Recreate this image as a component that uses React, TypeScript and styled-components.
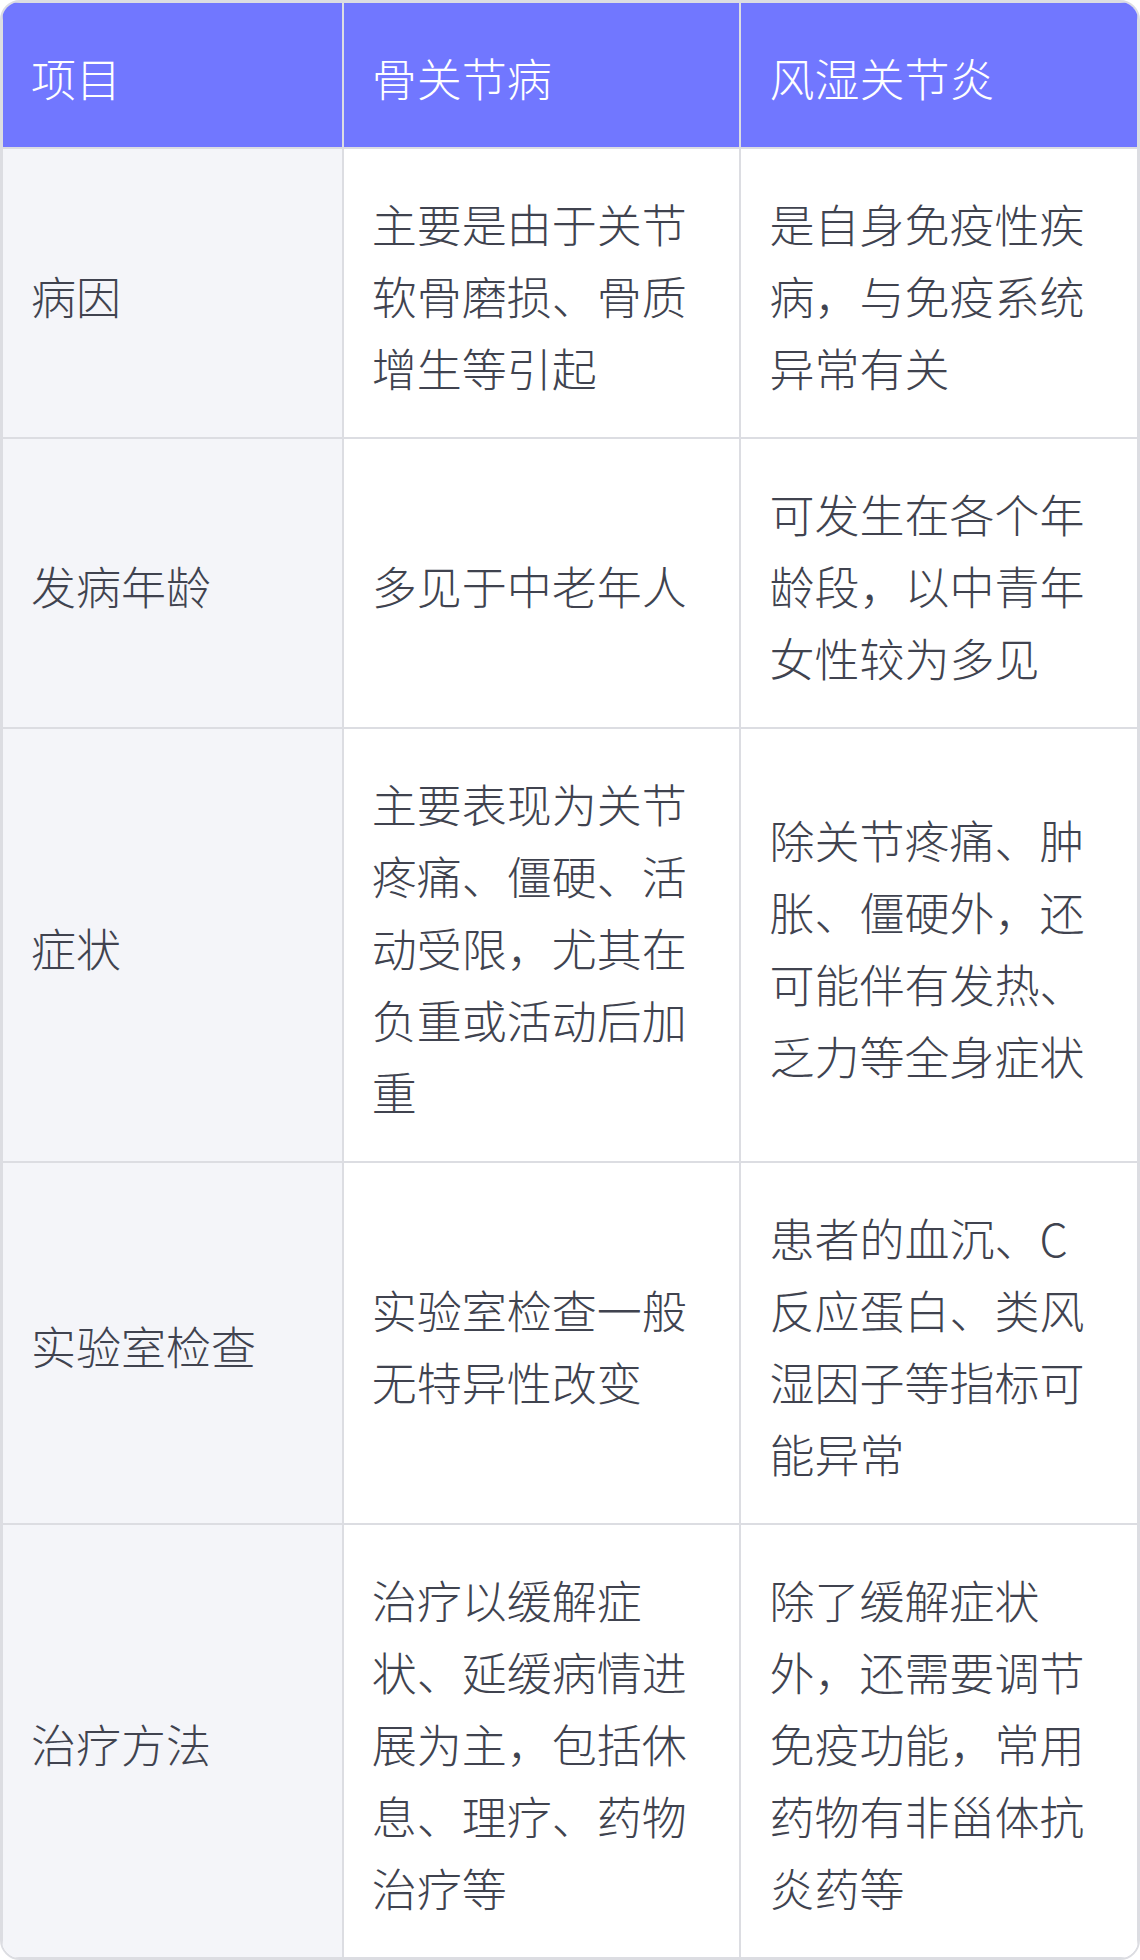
import React from "react";
import styled, { createGlobalStyle } from "styled-components";

const GlobalStyle = createGlobalStyle`
  html, body {
    margin: 0;
    padding: 0;
    background: #ffffff;
  }
  body {
    font-family: "Noto Sans CJK SC", "Noto Sans", sans-serif;
  }
`;

const Frame = styled.div`
  border: 2px solid #dcdde2;
  border-radius: 20px;
  overflow: hidden;
  background: #ffffff;
`;

const Table = styled.table`
  width: 100%;
  border-collapse: separate;
  border-spacing: 0;
  table-layout: fixed;
`;

const Cell = styled.td<{ $label?: boolean }>`
  box-sizing: border-box;
  border: 1px solid #dcdde2;
  padding: 39px 28px 33px;
  font-size: 45px;
  line-height: 72px;
  font-weight: 300;
  color: #40434f;
  vertical-align: middle;
  text-align: left;
  background: ${(p) => (p.$label ? "#f4f5f9" : "#ffffff")};
`;

const HeadCell = styled.th`
  box-sizing: border-box;
  border: 1px solid #dcdde2;
  padding: 39px 28px 33px;
  font-size: 45px;
  line-height: 72px;
  font-weight: 300;
  color: #ffffff;
  text-align: left;
  background: #7177ff;
`;

const headers = ["项目", "骨关节病", "风湿关节炎"];

const rows: [string, string, string][] = [
  ["病因", "主要是由于关节软骨磨损、骨质增生等引起", "是自身免疫性疾病，与免疫系统异常有关"],
  ["发病年龄", "多见于中老年人", "可发生在各个年龄段，以中青年女性较为多见"],
  [
    "症状",
    "主要表现为关节疼痛、僵硬、活动受限，尤其在负重或活动后加重",
    "除关节疼痛、肿胀、僵硬外，还可能伴有发热、乏力等全身症状",
  ],
  ["实验室检查", "实验室检查一般无特异性改变", "患者的血沉、C反应蛋白、类风湿因子等指标可能异常"],
  [
    "治疗方法",
    "治疗以缓解症状、延缓病情进展为主，包括休息、理疗、药物治疗等",
    "除了缓解症状外，还需要调节免疫功能，常用药物有非甾体抗炎药等",
  ],
];

function App() {
  return (
    <>
      <GlobalStyle />
      <Frame>
        <Table>
          <colgroup>
            <col style={{ width: "30%" }} />
            <col style={{ width: "35%" }} />
            <col style={{ width: "35%" }} />
          </colgroup>
          <thead>
            <tr>
              {headers.map((h) => (
                <HeadCell key={h}>{h}</HeadCell>
              ))}
            </tr>
          </thead>
          <tbody>
            {rows.map(([label, a, b]) => (
              <tr key={label}>
                <Cell $label>{label}</Cell>
                <Cell>{a}</Cell>
                <Cell>{b}</Cell>
              </tr>
            ))}
          </tbody>
        </Table>
      </Frame>
    </>
  );
}

export default App;
